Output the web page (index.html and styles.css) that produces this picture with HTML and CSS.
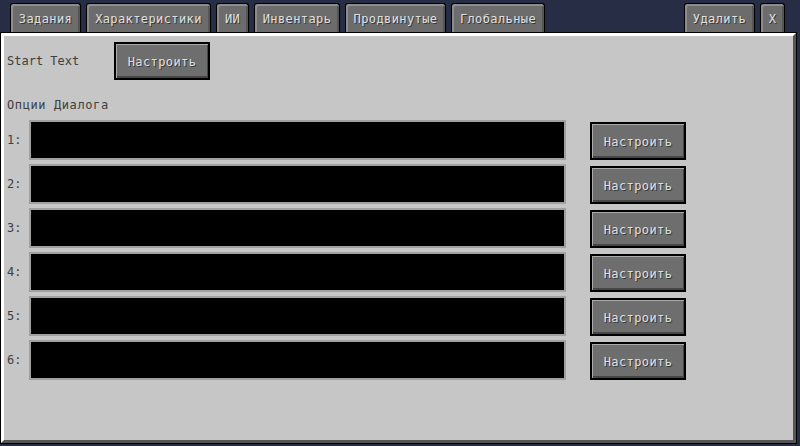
FILE: index.html
```html
<!DOCTYPE html>
<html lang="ru">
<head>
<meta charset="utf-8">
<link rel="stylesheet" href="styles.css">
</head>
<body>
<div class="screen">
  <div class="tabs">
    <div class="tab w-zad">Задания</div>
    <div class="tab w-har">Характеристики</div>
    <div class="tab w-ii">ИИ</div>
    <div class="tab w-inv">Инвентарь</div>
    <div class="tab w-pro">Продвинутые</div>
    <div class="tab w-glo">Глобальные</div>
    <div class="tab w-del">Удалить</div>
    <div class="tab w-x">X</div>
  </div>
  <div class="panel">
    <div class="start-row">
      <span class="label start-label">Start Text</span>
      <div class="btn">Настроить</div>
    </div>
    <div class="label section">Опции Диалога</div>
    <div class="options">
      <div class="opt"><span class="label num">1:</span><div class="field"></div><div class="btn">Настроить</div></div>
      <div class="opt"><span class="label num">2:</span><div class="field"></div><div class="btn">Настроить</div></div>
      <div class="opt"><span class="label num">3:</span><div class="field"></div><div class="btn">Настроить</div></div>
      <div class="opt"><span class="label num">4:</span><div class="field"></div><div class="btn">Настроить</div></div>
      <div class="opt"><span class="label num">5:</span><div class="field"></div><div class="btn">Настроить</div></div>
      <div class="opt"><span class="label num">6:</span><div class="field"></div><div class="btn">Настроить</div></div>
    </div>
  </div>
</div>
</body>
</html>
```
FILE: styles.css
```css
html, body {
  margin: 0;
  padding: 0;
}
body {
  width: 800px;
  height: 446px;
  overflow: hidden;
  background: #262d44;
  font-family: "DejaVu Sans Mono", monospace;
  font-size: 12px;
}
.screen {
  width: 800px;
  height: 446px;
}
.tabs {
  display: flex;
  gap: 5px;
  padding: 3px 15px 0 10px;
  height: 30px;
}
.tab {
  box-sizing: border-box;
  height: 31px;
  background: #6c6c6c;
  border: 1px solid #000;
  border-bottom: none;
  border-radius: 3px 3px 0 0;
  box-shadow: inset 2px 2px 0 #8d8d8d, inset -2px 0 0 #555;
  color: #e0e0e0;
  text-shadow: 1px 1px 0 #383838;
  display: flex;
  justify-content: center;
  padding-top: 8px;
  line-height: 14px;
  white-space: nowrap;
  letter-spacing: 0.4px;
}
.w-zad { width: 71px; }
.w-har { width: 125px; }
.w-ii { width: 33px; }
.w-inv { width: 86px; }
.w-pro { width: 101px; }
.w-glo { width: 94px; }
.w-del { width: 71px; margin-left: auto; }
.w-x { width: 25px; }
.panel {
  position: relative;
  box-sizing: border-box;
  margin-left: 1px;
  width: 795px;
  height: 410px;
  background: #c6c6c6;
  border-top: 3px solid #fff;
  border-left: 3px solid #fff;
  border-right: 3px solid #555;
  border-bottom: 3px solid #555;
  box-shadow: 0 0 0 1px #000;
  padding-left: 3px;
}
.label {
  color: #404040;
  line-height: 14px;
}
.start-row {
  display: flex;
  align-items: center;
  margin-top: 6px;
}
.start-label {
  width: 107px;
}
.btn {
  box-sizing: border-box;
  width: 96px;
  height: 38px;
  background: #6e6e6e;
  border: 2px solid #000;
  box-shadow: inset 1px 1px 0 #aaa, inset -1px -2px 0 #464646;
  color: #e0e0e0;
  text-shadow: 1px 1px 0 #383838;
  display: flex;
  align-items: center;
  justify-content: center;
  padding-top: 1px;
  letter-spacing: 0.4px;
}
.section {
  margin-top: 18px;
  letter-spacing: 0.6px;
}
.options {
  margin-top: 8px;
  display: flex;
  flex-direction: column;
  gap: 4px;
}
.opt {
  display: flex;
  align-items: flex-start;
}
.num {
  width: 22px;
  padding-top: 13px;
}
.field {
  box-sizing: border-box;
  width: 537px;
  height: 40px;
  background: #000;
  border: 2px solid #a0a0a0;
}
.opt .btn {
  margin-left: 24px;
  margin-top: 2px;
}
```
